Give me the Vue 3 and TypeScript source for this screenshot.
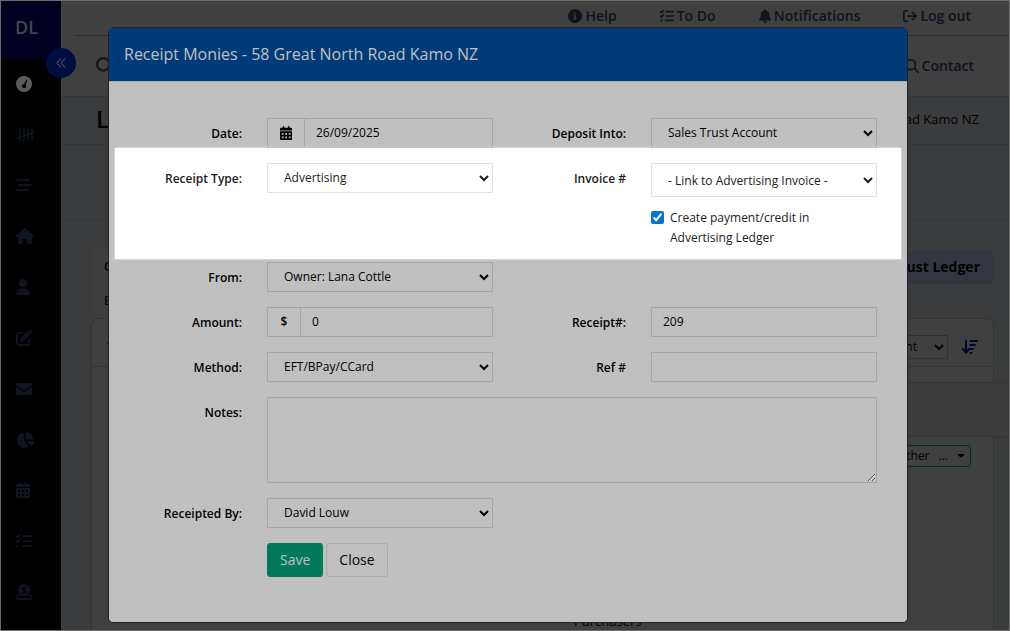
<script setup lang="ts">
import { h, ref } from 'vue'

interface Shape {
  box: string
  fill?: string
  line?: string
  weight?: number
}

const shapes: Record<string, Shape> = {
  info: {
    box: '0 0 512 512',
    fill: 'M256 512A256 256 0 1 0 256 0a256 256 0 1 0 0 512zM216 336h24V272H216c-13.3 0-24-10.7-24-24s10.7-24 24-24h48c13.3 0 24 10.7 24 24v88h8c13.3 0 24 10.7 24 24s-10.7 24-24 24H216c-13.3 0-24-10.7-24-24s10.7-24 24-24zm40-208a32 32 0 1 1 0 64 32 32 0 1 1 0-64z',
  },
  checklist: {
    box: '0 0 512 512',
    fill: 'M48 376a40 40 0 1 0 0 80 40 40 0 1 0 0-80z',
    line: 'M24 100l34 32 62-76M24 260l34 32 62-76M224 96h256M224 256h256M192 416h288',
    weight: 56,
  },
  bell: {
    box: '0 0 448 512',
    fill: 'M224 0c-17.7 0-32 14.3-32 32V51.2C119 66 64 130.6 64 208v18.8c0 47-17.3 92.4-48.5 127.6l-7.4 8.3c-8.4 9.4-10.4 22.9-5.3 34.4S19.4 416 32 416H416c12.6 0 24-7.4 29.2-18.9s3.1-25-5.3-34.4l-7.4-8.3C401.3 319.2 384 273.9 384 226.8V208c0-77.4-55-142-128-156.8V32c0-17.7-14.3-32-32-32zm45.3 493.3c12-12 18.7-28.3 18.7-45.3H224 160c0 17 6.7 33.3 18.7 45.3s28.3 18.7 45.3 18.7s33.3-6.7 45.3-18.7z',
  },
  logout: {
    box: '0 0 512 512',
    fill: 'M502.6 278.6c12.5-12.5 12.5-32.8 0-45.3l-128-128c-12.5-12.5-32.8-12.5-45.3 0s-12.5 32.8 0 45.3L402.7 224 192 224c-17.7 0-32 14.3-32 32s14.3 32 32 32l210.7 0-73.4 73.4c-12.5 12.5-12.5 32.8 0 45.3s32.8 12.5 45.3 0l128-128zM160 96c17.7 0 32-14.3 32-32s-14.3-32-32-32L96 32C43 32 0 75 0 128L0 384c0 53 43 96 96 96l64 0c17.7 0 32-14.3 32-32s-14.3-32-32-32l-64 0c-17.7 0-32-14.3-32-32l0-256c0-17.7 14.3-32 32-32l64 0z',
  },
  search: {
    box: '0 0 512 512',
    fill: 'M416 208c0 45.9-14.9 88.3-40 122.7L502.6 457.4c12.5 12.5 12.5 32.8 0 45.3s-32.8 12.5-45.3 0L330.7 376c-34.4 25.2-76.8 40-122.7 40C93.1 416 0 322.9 0 208S93.1 0 208 0S416 93.1 416 208zM208 352a144 144 0 1 0 0-288 144 144 0 1 0 0 288z',
  },
  chevrons: { box: '0 0 16 16', line: 'M7.5 2.5L2.5 8l5 5.5M13 2.5L8 8l5 5.5', weight: 1.5 },
  gauge: {
    box: '0 0 512 512',
    fill: 'M256 0a256 256 0 1 0 0 512A256 256 0 1 0 256 0zM325 118c12-20 42-6 35 18L308 290a64 64 0 1 1-48-26z',
  },
  tally: { box: '0 0 20 16', line: 'M4 2v12M8 2v12M12 2v12M16 2v12M1 11L19 5', weight: 1.5 },
  bars: { box: '0 0 16 16', line: 'M1 2h11.500M3 7h12M1 12h11.500', weight: 2 },
  house: {
    box: '0 0 576 512',
    fill: 'M575.8 255.5c0 18-15 32.1-32 32.1h-32l.7 160.2c0 2.7-.2 5.4-.5 8.1V472c0 22.1-17.9 40-40 40H456c-1.1 0-2.2 0-3.3-.1c-1.4 .1-2.8 .1-4.2 .1H416 392c-22.1 0-40-17.9-40-40V448 384c0-17.7-14.3-32-32-32H256c-17.7 0-32 14.3-32 32v64 24c0 22.1-17.9 40-40 40H160 128.1c-1.5 0-3-.1-4.5-.2c-1.2 .1-2.4 .2-3.6 .2H104c-22.1 0-40-17.9-40-40V360c0-.9 0-1.9 .1-2.8V287.6H32c-18 0-32-14-32-32.1c0-9 3-17 10-24L266.4 8c7-7 15-8 22-8s15 2 21 7L564.8 231.5c8 7 12 15 11 24z',
  },
  user: {
    box: '0 0 448 512',
    fill: 'M224 256A128 128 0 1 0 224 0a128 128 0 1 0 0 256zm-45.7 48C79.8 304 0 383.8 0 482.3C0 498.7 13.3 512 29.7 512H418.3c16.4 0 29.7-13.3 29.7-29.7C448 383.8 368.2 304 269.7 304H178.3z',
  },
  edit: {
    box: '0 0 512 512',
    fill: 'M471.6 21.7c-21.9-21.9-57.3-21.9-79.2 0L362.3 51.7l97.9 97.9 30.1-30.1c21.9-21.9 21.9-57.3 0-79.2L471.6 21.7zm-299.2 220c-6.1 6.1-10.8 13.6-13.5 21.9l-29.6 88.8c-2.9 8.6-.6 18.1 5.8 24.6s15.9 8.7 24.6 5.8l88.8-29.6c8.2-2.7 15.7-7.4 21.9-13.5L437.7 172.3 339.7 74.3 172.4 241.7zM96 64C43 64 0 107 0 160V416c0 53 43 96 96 96H352c53 0 96-43 96-96V320c0-17.7-14.3-32-32-32s-32 14.3-32 32v96c0 17.7-14.3 32-32 32H96c-17.7 0-32-14.3-32-32V160c0-17.7 14.3-32 32-32h96c17.7 0 32-14.3 32-32s-14.3-32-32-32H96z',
  },
  mail: {
    box: '0 0 512 512',
    fill: 'M48 64C21.5 64 0 85.5 0 112c0 15.1 7.1 29.3 19.2 38.4L236.8 313.6c11.4 8.5 27 8.5 38.4 0L492.8 150.4c12.1-9.1 19.2-23.3 19.2-38.4c0-26.5-21.5-48-48-48H48zM0 176V384c0 35.3 28.7 64 64 64H448c35.3 0 64-28.7 64-64V176L294.4 339.2c-22.8 17.1-54 17.1-76.8 0L0 176z',
  },
  pie: {
    box: '0 0 576 512',
    fill: 'M304 240V16.6c0-9 7-16.6 16-16.6C443.7 0 544 100.3 544 224c0 9-7.6 16-16.6 16H304zM32 272C32 150.7 122.1 50.3 239 34.3c9.2-1.3 17 6.1 17 15.4V288L412.5 444.5c6.7 6.7 6.2 17.7-1.5 23.1C371.8 495.6 323.8 512 272 512C139.5 512 32 404.6 32 272zm526.4 16c9.3 0 16.6 7.8 15.4 17c-7.7 55.9-34.6 105.6-73.9 142.3c-6 5.6-15.4 5.2-21.2-.7L320 288H558.4z',
  },
  calendar: {
    box: '0 0 448 512',
    fill: 'M128 0c17.7 0 32 14.3 32 32V64H288V32c0-17.7 14.3-32 32-32s32 14.3 32 32V64h48c26.5 0 48 21.5 48 48v48H0V112C0 85.5 21.5 64 48 64H96V32c0-17.7 14.3-32 32-32zM0 192H448V464c0 26.5-21.5 48-48 48H48c-26.5 0-48-21.5-48-48V192zM64 256v64h64v-64zM192 256v64h64v-64zM320 256v64h64v-64zM64 384v64h64v-64zM192 384v64h64v-64zM320 384v64h64v-64z',
  },
  donate: {
    box: '0 0 16 16',
    fill: 'M8 0a6 6 0 1 0 0 12A6 6 0 0 0 8 0z',
    line: 'M2.5 11L1 12.500V15h14v-2.500L13.500 11',
    weight: 1.5,
  },
  sort: {
    box: '0 0 16 16',
    line: 'M4 2v11M1 10l3 3.500 3-3.500M8.500 2h6.500M8.500 6h4.500M8.500 10h2.500M8.500 14h1',
    weight: 2,
  },
}

const Glyph = (props: { name: string }) => {
  const s = shapes[props.name]
  const parts = []
  if (s.fill) parts.push(h('path', { d: s.fill, fill: 'currentColor', 'fill-rule': 'evenodd' }))
  if (s.line) {
    parts.push(
      h('path', {
        d: s.line,
        fill: 'none',
        stroke: 'currentColor',
        'stroke-width': s.weight,
        'stroke-linecap': 'round',
        'stroke-linejoin': 'round',
      }),
    )
  }
  if (props.name === 'donate') {
    parts.push(
      h('path', {
        d: 'M10 3.800C9 3 6.500 3 6.500 4.500S9.800 6 9.800 7.600 7 9 6 8.200M8 2.200v7.600',
        fill: 'none',
        stroke: '#000',
        'stroke-width': 1.2,
      }),
    )
  }
  return h('svg', { viewBox: s.box, 'aria-hidden': 'true' }, parts)
}
Glyph.props = ['name']

const sideItems = [
  { icon: 'gauge', label: 'Dashboard' },
  { icon: 'tally', label: 'Tallies' },
  { icon: 'bars', label: 'Lists' },
  { icon: 'house', label: 'Properties' },
  { icon: 'user', label: 'Contacts' },
  { icon: 'edit', label: 'Notes' },
  { icon: 'mail', label: 'Mail' },
  { icon: 'pie', label: 'Reports' },
  { icon: 'calendar', label: 'Calendar' },
  { icon: 'checklist', label: 'Tasks' },
  { icon: 'donate', label: 'Trust' },
]

const topLinks = [
  { icon: 'info', label: 'Help' },
  { icon: 'checklist', label: 'To Do' },
  { icon: 'bell', label: 'Notifications' },
  { icon: 'logout', label: 'Log out' },
]

const date = ref('26/09/2025')
const amount = ref('0')
const receiptNo = ref('209')
const refNo = ref('')
const notes = ref('')
const createPayment = ref(true)
</script>

<template>
  <div class="page">
    <aside class="side">
      <div class="brand">DL</div>
      <nav class="side-nav">
        <a
          v-for="item in sideItems"
          :key="item.icon"
          href="#"
          :aria-label="item.label"
          :class="['side-link', { current: item.icon === 'gauge' }]"
        >
          <Glyph :name="item.icon" class="side-icon" />
        </a>
      </nav>
      <button class="collapse" type="button" aria-label="Collapse menu">
        <Glyph name="chevrons" class="collapse-icon" />
      </button>
    </aside>

    <main class="main">
      <nav class="top-nav">
        <a v-for="link in topLinks" :key="link.label" href="#" class="top-link">
          <Glyph :name="link.icon" class="top-icon" />{{ link.label }}
        </a>
      </nav>
      <div class="search-bar">
        <Glyph name="search" class="big-search" />
        <a href="#" class="top-link"><Glyph name="search" class="top-icon" />Contact</a>
      </div>
      <div class="title-bar">
        <h1>Ledger</h1>
        <span>58 Great North Road Kamo NZ</span>
      </div>
      <div class="summary"></div>
      <div class="tabs">
        <div class="tab-list">
          <a href="#">Contract</a>
          <a href="#" class="visited">Expenses</a>
        </div>
        <a href="#" class="tab-active">Trust Ledger</a>
      </div>
      <section class="card">
        <div class="card-head">
          <strong>Transactions</strong>
          <div class="card-tools">
            <select aria-label="Sort field"><option>Amount</option></select>
            <button type="button" class="sort" aria-label="Sort order">
              <Glyph name="sort" class="sort-icon" />
            </button>
          </div>
        </div>
        <div class="wide-row"></div>
        <button type="button" class="other">
          <span>Other</span><span>...</span><i class="caret"></i>
        </button>
        <div class="purchasers">Purchasers</div>
      </section>
    </main>

    <div class="overlay">
      <form class="modal" role="dialog" aria-labelledby="modal-title" @submit.prevent>
        <h2 id="modal-title">Receipt Monies - 58 Great North Road Kamo NZ</h2>
        <div class="modal-body">
          <div class="row">
            <label class="name" for="date">Date:</label>
            <div class="field group">
              <span class="addon"><Glyph name="calendar" class="cal-icon" /></span>
              <input id="date" v-model="date" type="text" class="control" />
            </div>
            <label class="name" for="deposit">Deposit Into:</label>
            <div class="field">
              <select id="deposit" class="control"><option>Sales Trust Account</option></select>
            </div>
          </div>

          <div class="row spotlight">
            <label class="name" for="type">Receipt Type:</label>
            <div class="field">
              <select id="type" class="control"><option>Advertising</option></select>
            </div>
            <label class="name" for="invoice">Invoice #</label>
            <div class="field">
              <select id="invoice" class="control tall">
                <option>- Link to Advertising Invoice -</option>
              </select>
              <label class="check">
                <input v-model="createPayment" type="checkbox" />
                <span>Create payment/credit in Advertising Ledger</span>
              </label>
            </div>
          </div>

          <div class="row">
            <label class="name" for="from">From:</label>
            <div class="field">
              <select id="from" class="control"><option>Owner: Lana Cottle</option></select>
            </div>
          </div>

          <div class="row">
            <label class="name" for="amount">Amount:</label>
            <div class="field group">
              <span class="addon currency">$</span>
              <input id="amount" v-model="amount" type="text" class="control" />
            </div>
            <label class="name" for="receipt-no">Receipt#:</label>
            <div class="field"><input id="receipt-no" v-model="receiptNo" type="text" class="control" /></div>
          </div>

          <div class="row">
            <label class="name" for="method">Method:</label>
            <div class="field">
              <select id="method" class="control"><option>EFT/BPay/CCard</option></select>
            </div>
            <label class="name" for="ref-no">Ref #</label>
            <div class="field"><input id="ref-no" v-model="refNo" type="text" class="control" /></div>
          </div>

          <div class="row">
            <label class="name" for="notes">Notes:</label>
            <div class="field full"><textarea id="notes" v-model="notes" class="control"></textarea></div>
          </div>

          <div class="row">
            <label class="name" for="by">Receipted By:</label>
            <div class="field">
              <select id="by" class="control"><option>David Louw</option></select>
            </div>
          </div>

          <div class="row">
            <div class="field actions">
              <button type="submit" class="btn save">Save</button>
              <button type="button" class="btn">Close</button>
            </div>
          </div>
        </div>
      </form>
    </div>
  </div>
</template>

<style>
body {
  margin: 0;
}
</style>

<style scoped>
* {
  box-sizing: border-box;
}
.page {
  position: relative;
  display: flex;
  height: 100vh;
  overflow: hidden;
  border: 1px solid #6c6c6c;
  background: #3b3c3e;
  color: #000;
  font: 12px/20px 'Open Sans', 'Noto Sans', sans-serif;
}
a {
  color: inherit;
  text-decoration: none;
}
button,
input,
select,
textarea {
  font: inherit;
  color: inherit;
}

/* sidebar */
.side {
  position: relative;
  display: flex;
  flex-direction: column;
  flex: none;
  width: 60px;
  background: #000;
}
.brand {
  height: 58px;
  padding-left: 14px;
  background: #000022;
  color: #40484c;
  font-size: 18px;
  font-weight: 600;
  line-height: 52px;
}
.side-nav {
  flex: 1;
  display: flex;
  flex-direction: column;
  justify-content: space-between;
  padding: 17px 15px 30px;
}
.side-link {
  display: flex;
  color: #0f141e;
}
.current {
  color: #5c5c5c;
}
.side-icon {
  height: 16px;
}
.collapse {
  position: absolute;
  top: 47px;
  right: -15px;
  z-index: 1;
  display: grid;
  place-items: center;
  width: 30px;
  height: 30px;
  padding: 0;
  border: 0;
  border-radius: 50%;
  background: #000d40;
  color: #3c4a60;
}
.collapse-icon {
  width: 12px;
}

/* page behind the dialog */
.main {
  flex: 1;
  min-width: 0;
}
.top-nav {
  display: flex;
  justify-content: flex-end;
  gap: 43px;
  height: 35px;
  padding: 5px 38px 0 0;
  background: linear-gradient(#2c2d30, #2c2d30) 15px 100% / 100% 1px no-repeat #404040;
}
.top-link {
  display: flex;
  align-items: center;
  gap: 3px;
  height: 20px;
  color: #0e131d;
  font-size: 14px;
  font-weight: 600;
}
.top-icon {
  height: 14px;
}
.search-bar {
  display: flex;
  align-items: center;
  justify-content: space-between;
  height: 61px;
  padding: 0 35px;
  border-bottom: 1px solid #353638;
  background: #404040;
}
.big-search {
  height: 18px;
  color: #15171b;
}
.title-bar {
  display: flex;
  align-items: center;
  justify-content: space-between;
  height: 48px;
  padding: 0 30px 4px 35px;
  border-bottom: 1px solid #343537;
  font-size: 13px;
}
h1 {
  margin: 0;
  font-size: 24px;
  font-weight: 600;
}
.summary {
  height: 75px;
  border-bottom: 1px solid #343537;
}
.tabs {
  display: flex;
  align-items: flex-start;
  justify-content: space-between;
  padding: 30px 16px 0 30px;
}
.tab-list {
  display: flex;
  flex-direction: column;
  gap: 14px;
  width: 200px;
  height: 68px;
  padding: 7px 13px 0;
  background: #3e3e3e;
  font-weight: 600;
}
.visited {
  color: #080820;
}
.tab-active {
  padding: 7px 13px;
  border-radius: 4px;
  background: #34363f;
  font-size: 14px;
  font-weight: 700;
}
.card {
  height: 400px;
  margin: 0 15px 0 30px;
  border: 1px solid #343537;
  border-radius: 8px 8px 0 0;
  background: #404040;
}
.card-head {
  display: flex;
  align-items: center;
  justify-content: space-between;
  height: 48px;
  padding: 8px 15px 0;
  border-bottom: 1px solid #343537;
}
.card-tools {
  display: flex;
  align-items: center;
  gap: 14px;
}
.card-tools select {
  width: 90px;
  height: 24px;
  padding: 0 0 0 9px;
  border: 1px solid #303133;
  border-radius: 0;
  background: transparent;
}
.sort {
  display: flex;
  padding: 0;
  border: 0;
  background: none;
  color: #02082a;
}
.sort-icon {
  width: 16px;
}
.wide-row {
  height: 55px;
  margin: 15px -16px 0 40px;
  border: 1px solid #343537;
  border-width: 1px 0;
  background: #3d3d3d;
}
.other {
  display: flex;
  align-items: center;
  gap: 9px;
  height: 22px;
  margin: 8px 22px 0 auto;
  padding: 0 5px 0 8px;
  border: 1px solid #00301f;
  border-radius: 3px;
  background: none;
}
.caret {
  border: 4px solid transparent;
  border-width: 4px 4px 0;
  border-top-color: #000;
}
.purchasers {
  margin: 144px 0 0 482px;
  font-size: 13px;
}

/* dialog */
.overlay {
  position: absolute;
  inset: 0;
  z-index: 2;
  padding: 26px 101px 0 107px;
}
.modal {
  border: 1px solid #222;
  border-radius: 5px;
  background: #c0c0c0;
  overflow: hidden;
}
h2 {
  margin: 0;
  padding: 14px 15px 15px;
  border-bottom: 1px solid #a9acb0;
  background: #003b79;
  color: #c0c0c0;
  font-size: 16px;
  font-weight: 400;
  line-height: 24px;
}
.modal-body {
  display: flex;
  flex-direction: column;
  gap: 15px;
  padding: 36px 15px 45px;
}
.row {
  display: grid;
  grid-template-columns: 2fr 4fr 2fr 4fr;
  align-items: start;
}
.name {
  padding: 6px 10px 0 0;
  font-weight: 600;
  text-align: right;
}
.field {
  min-width: 0;
  padding: 0 15px;
}
.full {
  grid-column: span 3;
}
.group {
  display: flex;
}
.control {
  display: block;
  width: 100%;
  min-width: 0;
  height: 30px;
  margin: 0;
  padding: 0 11px 2px;
  border: 1px solid #a6a6a6;
  border-radius: 0;
  background: transparent;
  outline: 0;
}
textarea.control {
  height: 86px;
  resize: both;
}
select.control {
  padding: 0 12px 2px;
}
.addon {
  display: grid;
  place-items: center;
  flex: none;
  width: 37px;
  border: 1px solid #a6a6a6;
  border-right: 0;
}
.currency {
  width: 33px;
  font-weight: 600;
}
.cal-icon {
  height: 14px;
}
.spotlight {
  position: relative;
  margin: -15px -9px -12px;
  padding: 15px 9px 11px;
  background: #fff;
  box-shadow: 0 0 2px #fff;
  color: #1c1c1c;
}
.spotlight .control {
  border-color: #e2e2e2;
}
.spotlight .tall {
  height: 34px;
  padding-bottom: 0;
}
.check {
  display: flex;
  align-items: flex-start;
  gap: 6px;
  margin-top: 11px;
  padding-right: 30px;
}
.check input {
  flex: none;
  width: 13px;
  height: 13px;
  margin: 3px 0 0;
  accent-color: #0075d2;
}
.actions {
  grid-column: 2;
  display: flex;
  gap: 3px;
}
.btn {
  height: 34px;
  padding: 0 12px;
  border: 1px solid #a9a9a9;
  border-radius: 3px;
  background: transparent;
  font-size: 14px;
}
.save {
  border-color: #007a59;
  background: #007a59;
  color: #c0c0c0;
}
</style>
